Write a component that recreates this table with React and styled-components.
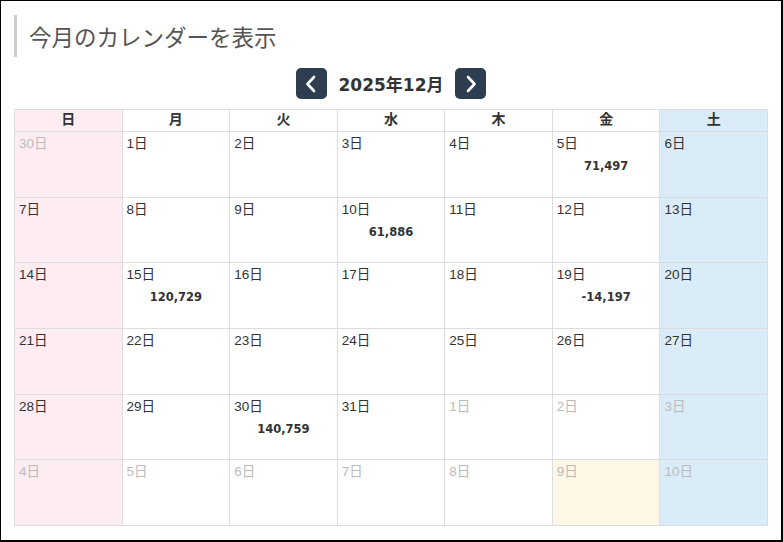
import React from "react";
import styled, { createGlobalStyle } from "styled-components";

const Global = createGlobalStyle`
  html, body { margin: 0; padding: 0; background: #fff; }
  body { font-family: "DejaVu Sans", "Noto Sans CJK JP", sans-serif; color: #333; }
`;

const Frame = styled.div`
  box-sizing: border-box;
  width: 783px;
  height: 542px;
  border-style: solid;
  border-color: #000;
  border-width: 1px 2px 2px 1px;
  padding: 14px 13px 0 13px;
  display: flex;
  flex-direction: column;
`;

const Heading = styled.h2`
  margin: 0;
  height: 42px;
  line-height: 42px;
  border-left: 3px solid #ccc;
  padding-left: 12px;
  font-family: "Noto Sans CJK JP", sans-serif;
  font-weight: 400;
  font-size: 22.5px;
  color: #555;
`;

const Nav = styled.div`
  margin-top: 11px;
  display: flex;
  justify-content: center;
  align-items: center;
  gap: 12px;
  height: 31px;
`;

const NavButton = styled.button`
  width: 31px;
  height: 31px;
  border: none;
  border-radius: 5px;
  background: #2c3e50;
  padding: 0;
  display: flex;
  align-items: center;
  justify-content: center;
`;

const MonthTitle = styled.div`
  font-family: "DejaVu Sans", "Noto Sans CJK JP", sans-serif;
  font-weight: 700;
  font-size: 17px;
  color: #333;
`;

const Grid = styled.div`
  margin-top: 10px;
  box-sizing: border-box;
  height: 417px;
  display: grid;
  grid-template-columns: repeat(7, 1fr);
  grid-template-rows: 22px repeat(6, 1fr);
  border-top: 1px solid #ddd;
  border-left: 1px solid #ddd;
`;

const bgFor = (c) =>
  c === "sun" ? "#fdedf3" : c === "sat" ? "#d9ecf8" : c === "today" ? "#fdf7e6" : "#fff";

const HeadCell = styled.div`
  box-sizing: border-box;
  border-right: 1px solid #ddd;
  border-bottom: 1px solid #ddd;
  background: ${(p) => bgFor(p.$kind)};
  text-align: center;
  font-family: "Noto Sans CJK JP", sans-serif;
  font-weight: 700;
  font-size: 14px;
  line-height: 17px;
  color: #333;
`;

const DayCell = styled.div`
  box-sizing: border-box;
  border-right: 1px solid #ddd;
  border-bottom: 1px solid #ddd;
  background: ${(p) => bgFor(p.$kind)};
  padding: 2px 4px;
  display: flex;
  flex-direction: column;
`;

const DayLabel = styled.div`
  font-family: "Liberation Sans", "Noto Sans CJK JP", sans-serif;
  font-size: 13.5px;
  line-height: 20px;
  color: ${(p) => (p.$muted ? "#bbb" : "#333")};
`;

const Amount = styled.div`
  margin-top: 4px;
  text-align: center;
  font-family: "DejaVu Sans", sans-serif;
  font-weight: 700;
  font-size: 11.5px;
  line-height: 16px;
  color: #333;
`;

const Chevron = ({ dir }) => (
  <svg width="14" height="18" viewBox="0 0 14 18">
    <path
      d={dir === "left" ? "M10 2 L3.5 9 L10 16" : "M4 2 L10.5 9 L4 16"}
      fill="none"
      stroke="#fff"
      strokeWidth="2.6"
      strokeLinecap="round"
      strokeLinejoin="round"
    />
  </svg>
);

const heads = ["日", "月", "火", "水", "木", "金", "土"];

const amounts = { 5: "71,497", 10: "61,886", 15: "120,729", 19: "-14,197", 30: "140,759" };

const buildDays = () => {
  const days = [{ d: 30, out: true }];
  for (let i = 1; i <= 31; i++) days.push({ d: i, out: false });
  for (let i = 1; i <= 10; i++) days.push({ d: i, out: true, next: true });
  return days;
};

export default function App() {
  const days = buildDays();
  return (
    <>
      <Global />
      <Frame>
        <Heading>今月のカレンダーを表示</Heading>
        <Nav>
          <NavButton aria-label="前月">
            <Chevron dir="left" />
          </NavButton>
          <MonthTitle>2025年12月</MonthTitle>
          <NavButton aria-label="翌月">
            <Chevron dir="right" />
          </NavButton>
        </Nav>
        <Grid>
          {heads.map((h, i) => (
            <HeadCell key={h} $kind={i === 0 ? "sun" : i === 6 ? "sat" : ""}>
              {h}
            </HeadCell>
          ))}
          {days.map((day, idx) => {
            const col = idx % 7;
            let kind = col === 0 ? "sun" : col === 6 ? "sat" : "";
            if (day.next && day.d === 9) kind = "today";
            return (
              <DayCell key={idx} $kind={kind}>
                <DayLabel $muted={day.out}>{day.d}日</DayLabel>
                {!day.out && amounts[day.d] && <Amount>{amounts[day.d]}</Amount>}
              </DayCell>
            );
          })}
        </Grid>
      </Frame>
    </>
  );
}
